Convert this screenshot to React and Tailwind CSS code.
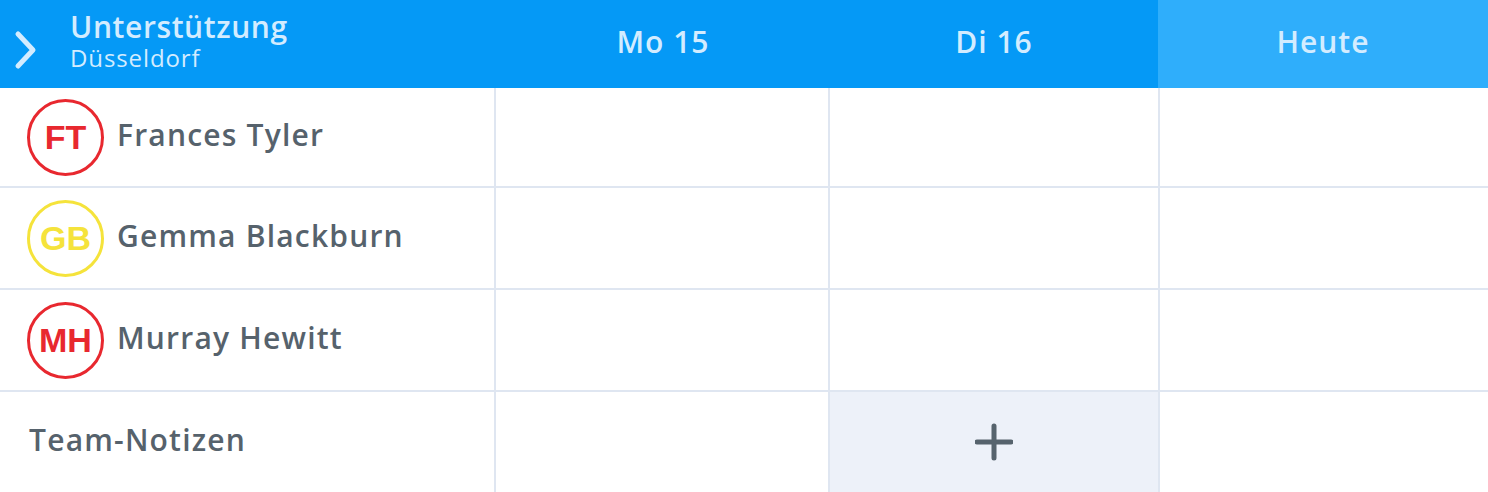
const people = [
  { initials: 'FT', name: 'Frances Tyler', ring: 'border-[#e8282f] text-[#e8282f]' },
  { initials: 'GB', name: 'Gemma Blackburn', ring: 'border-[#f5e33b] text-[#f5e33b]' },
  { initials: 'MH', name: 'Murray Hewitt', ring: 'border-[#e8282f] text-[#e8282f]' },
];

const Avatar = ({ initials, ring }) => (
  <div
    className={`w-[77px] h-[77px] rounded-full border-[3px] flex items-center justify-center shrink-0 ${ring}`}
    style={{ fontFamily: '"Liberation Sans", Arial, sans-serif' }}
  >
    <span className="text-[34px] font-bold leading-none">{initials}</span>
  </div>
);

const Cell = ({ className = '', children }) => (
  <div className={`border-r-2 border-[#dfe6f1] ${className}`}>{children}</div>
);

export default function App() {
  return (
    <div
      className="w-[1488px] h-[492px] bg-white overflow-hidden text-[#56626c]"
      style={{ fontFamily: '"Open Sans", Lato, sans-serif' }}
    >
      {/* Header */}
      <div className="grid grid-cols-[496px_334px_328px_1fr] h-[88px] bg-[#0599f6] text-[#d3ecff]">
        <div className="flex items-start">
          <svg width="23" height="40" viewBox="0 0 23 40" className="ml-[14px] mt-[30px]" fill="none">
            <path d="M4 4 L19 20 L4 36" stroke="#d3ecff" strokeWidth="5" strokeLinecap="round" strokeLinejoin="round" />
          </svg>
          <div className="ml-[33px] pt-[12px] flex flex-col">
            <span className="text-[30px] font-semibold leading-[30px] tracking-[0.6px]">Unterstützung</span>
            <span className="text-[24px] leading-[28px] mt-[2px] tracking-[0.9px]">Düsseldorf</span>
          </div>
        </div>
        <div className="flex items-center justify-center text-[30px] font-semibold tracking-[1px] pb-[6px]">Mo 15</div>
        <div className="flex items-center justify-center text-[30px] font-semibold tracking-[1px] pb-[6px]">Di 16</div>
        <div className="flex items-center justify-center text-[30px] font-semibold tracking-[1px] pb-[6px] bg-[#2faefb]">Heute</div>
      </div>

      {/* Rows */}
      {people.map((p, i) => (
        <div
          key={p.initials}
          className={`grid grid-cols-[496px_334px_330px_1fr] border-b-2 border-[#dfe6f1] ${i === 0 ? 'h-[100px]' : 'h-[102px]'}`}
        >
          <Cell className="flex items-center pl-[27px]">
            <Avatar initials={p.initials} ring={p.ring} />
            <span className="ml-[13px] mb-[6px] text-[30px] font-semibold tracking-[1.2px]">{p.name}</span>
          </Cell>
          <Cell />
          <Cell />
          <div />
        </div>
      ))}

      <div className="grid grid-cols-[496px_334px_330px_1fr] h-[100px]">
        <Cell className="flex items-center pl-[29px]">
          <span className="mb-[5px] text-[30px] font-semibold tracking-[1.2px]">Team-Notizen</span>
        </Cell>
        <Cell />
        <Cell className="bg-[#edf1f9] flex items-center justify-center">
          <svg width="38" height="38" viewBox="0 0 38 38" fill="none">
            <path d="M19 3 V35 M2 19 H36" stroke="#56636d" strokeWidth="5" strokeLinecap="round" />
          </svg>
        </Cell>
        <div />
      </div>
    </div>
  );
}
